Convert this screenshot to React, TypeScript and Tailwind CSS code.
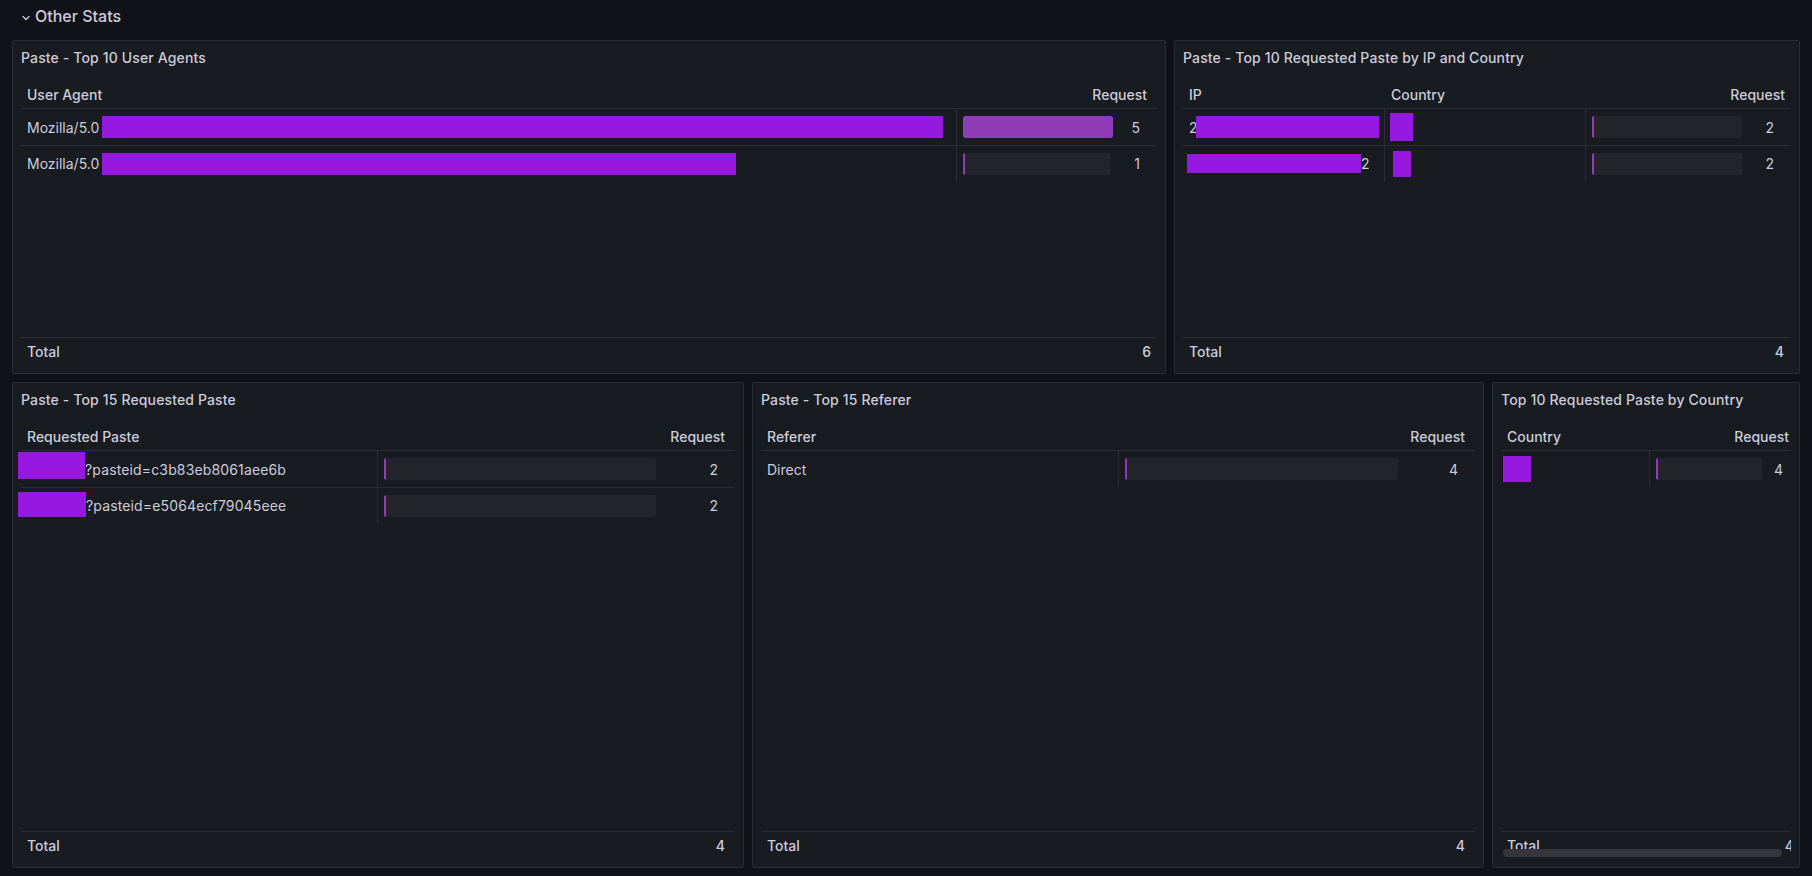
import React from "react";

const PURPLE = "bg-[#9619e0]";

function Panel({
  title,
  className,
  children,
}: {
  title: string;
  className?: string;
  children: React.ReactNode;
}) {
  return (
    <div
      className={
        "relative flex flex-col bg-[#181b1f] border border-[#2a2d33] rounded-[2px] " +
        (className ?? "")
      }
    >
      <div className="h-[32px] shrink-0 flex items-center px-[8px] text-[14px] font-medium text-[#ccccdc] whitespace-nowrap tracking-[0.01em]">
        {title}
      </div>
      <div className="flex-1 min-h-0 p-[8px] overflow-hidden">{children}</div>
    </div>
  );
}

function Gauge({
  width,
  fill,
  value,
  pr,
}: {
  width: number;
  fill: number;
  value: string;
  pr: string;
}) {
  return (
    <div className="flex items-center h-full border-l border-[#2a2d33] pl-[6px]">
      <div
        className="relative h-[22px] rounded-[2px] bg-[#22252b] overflow-hidden shrink-0"
        style={{ width }}
      >
        <div
          className="absolute left-0 top-0 h-full bg-[#8e3db6] rounded-[2px]"
          style={{ width: Math.max(2, width * fill) }}
        />
      </div>
      <div className={"flex-1 text-right text-[14px] " + pr}>{value}</div>
    </div>
  );
}

function Footer({ value, pr = "pr-[7px]" }: { value: string; pr?: string }) {
  return (
    <div className="h-[28px] shrink-0 border-t border-[#2a2d33] flex items-center justify-between text-[14px] font-medium">
      <span className="pl-[6px]">Total</span>
      <span className={pr}>{value}</span>
    </div>
  );
}

function UserAgents() {
  const rows = [
    { bar: 841, fill: 1, v: "5", w: 150 },
    { bar: 634, fill: 0, v: "1", w: 147 },
  ];
  return (
    <div className="flex flex-col h-full text-[#ccccdc]">
      <div className="h-[28px] shrink-0 flex items-center border-b border-[#2a2d33] text-[14px] font-medium">
        <div className="w-[935px] pl-[6px]">User Agent</div>
        <div className="flex-1 text-right pr-[10px]">Request</div>
      </div>
      <div className="flex-1">
        {rows.map((r, i) => (
          <div
            key={i}
            className={
              "h-[36px] flex items-stretch " + (i > 0 ? "border-t border-[#2a2d33]" : "")
            }
          >
            <div className="w-[935px] flex items-center pl-[6px] text-[14px] whitespace-nowrap">
              <span className="w-[75px] shrink-0">Mozilla/5.0</span>
              <span className={"inline-block h-[22px] " + PURPLE} style={{ width: r.bar }} />
            </div>
            <div className="flex-1">
              <Gauge width={r.w} fill={r.fill} value={r.v} pr="pr-[17px]" />
            </div>
          </div>
        ))}
      </div>
      <Footer value="6" pr="pr-[6px]" />
    </div>
  );
}

function IpCountry() {
  return (
    <div className="flex flex-col h-full text-[#ccccdc]">
      <div className="h-[28px] shrink-0 flex items-center border-b border-[#2a2d33] text-[14px] font-medium">
        <div className="w-[201px] pl-[6px]">IP</div>
        <div className="w-[201px] pl-[7px]">Country</div>
        <div className="flex-1 text-right pr-[6px]">Request</div>
      </div>
      <div className="flex-1">
        <div className="h-[36px] flex items-stretch">
          <div className="w-[201px] flex items-center pl-[6px] text-[14px]">
            <span className="w-[7px] shrink-0">2</span>
            <span className={"inline-block h-[22px] w-[183px] " + PURPLE} />
          </div>
          <div className="w-[201px] flex items-center border-l border-[#2a2d33] pl-[5px]">
            <span className={"inline-block h-[28px] w-[23px] " + PURPLE} />
          </div>
          <div className="flex-1">
            <Gauge width={150} fill={0} value="2" pr="pr-[17px]" />
          </div>
        </div>
        <div className="h-[36px] flex items-stretch border-t border-[#2a2d33]">
          <div className="w-[201px] flex items-center pl-[4px] text-[14px]">
            <span className={"inline-block h-[19px] w-[174px] " + PURPLE} />
            <span>2</span>
          </div>
          <div className="w-[201px] flex items-center border-l border-[#2a2d33] pl-[8px]">
            <span className={"inline-block h-[26px] w-[18px] " + PURPLE} />
          </div>
          <div className="flex-1">
            <Gauge width={150} fill={0} value="2" pr="pr-[17px]" />
          </div>
        </div>
      </div>
      <Footer value="4" pr="pr-[7px]" />
    </div>
  );
}

function RequestedPaste() {
  const rows = [
    { id: "?pasteid=c3b83eb8061aee6b", mt: "mt-[1px]", h: "h-[27px]", w: "w-[67px]" },
    { id: "?pasteid=e5064ecf79045eee", mt: "mt-[4px]", h: "h-[25px]", w: "w-[68px]" },
  ];
  return (
    <div className="flex flex-col h-full text-[#ccccdc]">
      <div className="h-[28px] shrink-0 flex items-center border-b border-[#2a2d33] text-[14px] font-medium">
        <div className="w-[356px] pl-[6px]">Requested Paste</div>
        <div className="flex-1 text-right pr-[10px]">Request</div>
      </div>
      <div className="flex-1">
        {rows.map((r, i) => (
          <div
            key={i}
            className={
              "h-[36px] flex items-stretch " + (i > 0 ? "border-t border-[#2a2d33]" : "")
            }
          >
            <div className="w-[356px] flex items-center text-[14px] whitespace-nowrap ml-[-3px] tracking-[0.01em]">
              <span className={"inline-block self-start " + r.mt + " " + r.h + " " + r.w + " " + PURPLE} />
              <span>{r.id}</span>
            </div>
            <div className="flex-1 ml-[3px]">
              <Gauge width={272} fill={0} value="2" pr="pr-[17px]" />
            </div>
          </div>
        ))}
      </div>
      <Footer value="4" pr="pr-[10px]" />
    </div>
  );
}

function Referer() {
  return (
    <div className="flex flex-col h-full text-[#ccccdc]">
      <div className="h-[28px] shrink-0 flex items-center border-b border-[#2a2d33] text-[14px] font-medium">
        <div className="w-[357px] pl-[6px]">Referer</div>
        <div className="flex-1 text-right pr-[10px]">Request</div>
      </div>
      <div className="flex-1">
        <div className="h-[36px] flex items-stretch">
          <div className="w-[357px] flex items-center pl-[6px] text-[14px]">Direct</div>
          <div className="flex-1">
            <Gauge width={273} fill={0} value="4" pr="pr-[17px]" />
          </div>
        </div>
      </div>
      <Footer value="4" pr="pr-[10px]" />
    </div>
  );
}

function ByCountry() {
  return (
    <div className="flex flex-col h-full text-[#ccccdc] overflow-hidden">
      <div className="h-[28px] shrink-0 flex items-center border-b border-[#2a2d33] text-[14px] font-medium whitespace-nowrap">
        <div className="w-[148px] pl-[6px]">Country</div>
        <div className="flex-1 text-right pr-[2px]">Request</div>
      </div>
      <div className="flex-1">
        <div className="h-[36px] flex items-stretch">
          <div className="w-[148px] flex items-center pl-[2px]">
            <span className={"inline-block h-[26px] w-[28px] " + PURPLE} />
          </div>
          <div className="flex-1">
            <Gauge width={106} fill={0} value="4" pr="pr-[8px]" />
          </div>
        </div>
      </div>
      <Footer value="4" pr="mr-[-3px]" />
    </div>
  );
}

export default function App() {
  return (
    <div className="w-full min-h-screen bg-[#111217] font-[Inter,'Noto_Sans',sans-serif] text-[#ccccdc]">
      <div className="h-[40px] flex items-start pl-[22px]">
        <div className="h-[32px] flex items-center gap-[5px]">
          <svg width="8" height="6" viewBox="0 0 8 6" className="mt-[3px]">
            <polyline
              points="1,1.5 4,4.5 7,1.5"
              fill="none"
              stroke="#ccccdc"
              strokeWidth="1.3"
              strokeLinecap="round"
              strokeLinejoin="round"
            />
          </svg>
          <span className="text-[16px] font-medium text-[#ccccdc]">Other Stats</span>
        </div>
      </div>
      <div className="px-[12px] flex flex-col gap-[8px]">
        <div className="flex gap-[8px] h-[334px]">
          <Panel title="Paste - Top 10 User Agents" className="w-[1154px] shrink-0">
            <UserAgents />
          </Panel>
          <Panel title="Paste - Top 10 Requested Paste by IP and Country" className="flex-1">
            <IpCountry />
          </Panel>
        </div>
        <div className="flex gap-[8px] h-[486px]">
          <Panel title="Paste - Top 15 Requested Paste" className="w-[732px] shrink-0">
            <RequestedPaste />
          </Panel>
          <Panel title="Paste - Top 15 Referer" className="w-[732px] shrink-0">
            <Referer />
          </Panel>
          <Panel title="Top 10 Requested Paste by Country" className="flex-1 min-w-0">
            <ByCountry />
            <div className="absolute left-[10px] bottom-[10px] w-[279px] h-[8px] rounded-full bg-[#34363b]" />
          </Panel>
        </div>
      </div>
    </div>
  );
}
